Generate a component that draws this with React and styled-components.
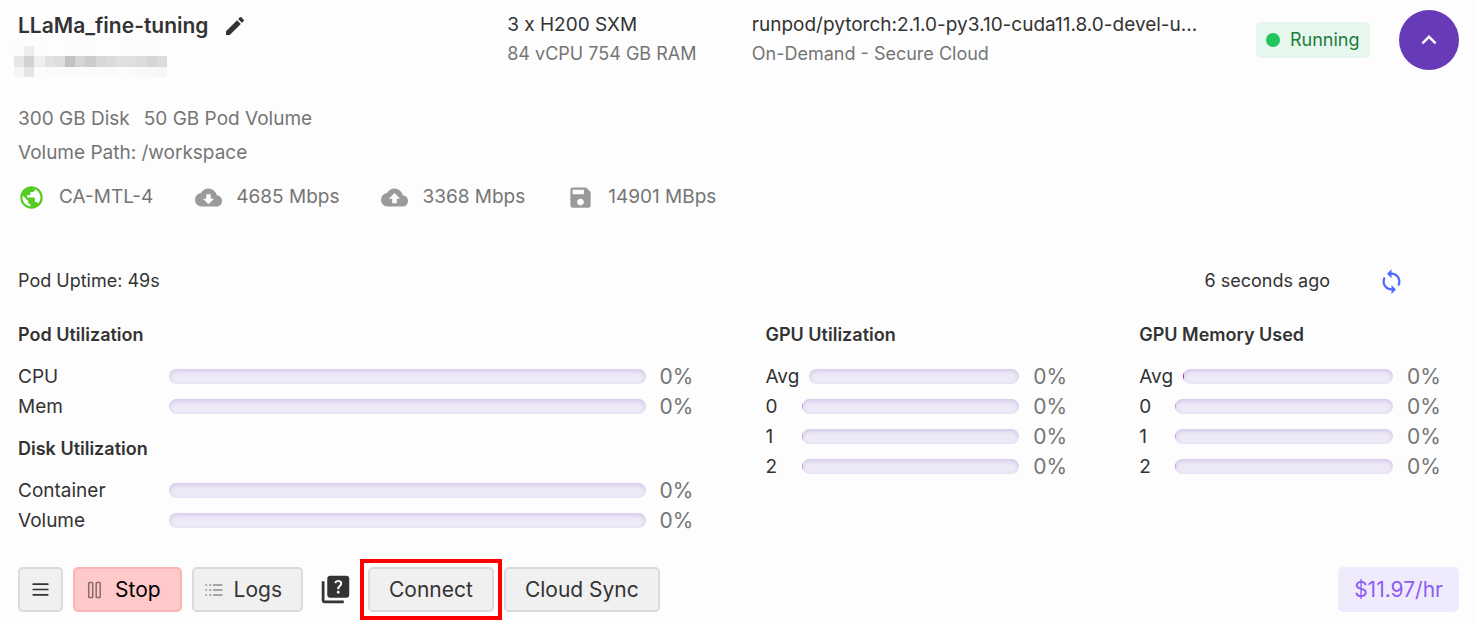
import React from 'react';
import styled, { createGlobalStyle } from 'styled-components';
import {
    MdEdit,
    MdPublic,
    MdCloudDownload,
    MdCloudUpload,
    MdSave,
    MdSync,
    MdQuiz,
    MdKeyboardArrowUp,
} from 'react-icons/md';

const GlobalStyle = createGlobalStyle`
    * {
        box-sizing: border-box;
    }
    body {
        margin: 0;
        background-color: #fdfdfd;
        color: #333;
        font-family: Inter, 'Liberation Sans', sans-serif;
        font-size: 19px;
        line-height: 30px;
    }
    button {
        font: inherit;
        cursor: pointer;
    }
`;

const Container = styled.main`
    padding: 10px 18px 0;
`;
const Header = styled.header`
    display: grid;
    grid-template-columns: minmax(0, 2fr) minmax(0, 1fr) minmax(0, 2fr) 218px;
`;
const Column = styled.div`
    display: flex;
    flex-direction: column;
    align-items: flex-start;
    padding-right: 32px;
`;
const NameRow = styled.div`
    display: flex;
    align-items: center;
    gap: 14px;
    height: 32px;
`;
const Name = styled.h1`
    margin: 0;
    font-size: 21px;
    font-weight: 600;
`;
const IconButton = styled.button`
    display: flex;
    padding: 0;
    border: 0;
    background: none;
    color: ${(props) => props.$color || '#333'};
`;
const Mosaic = styled.svg`
    display: block;
    margin: 4px 0 0 -4px;
`;
const Primary = styled.div`
    max-width: 100%;
    overflow: hidden;
    text-overflow: ellipsis;
    white-space: nowrap;
    line-height: 30px;
`;
const Secondary = styled.div`
    color: #757575;
    font-size: 18px;
    line-height: 28px;
    white-space: nowrap;
`;
const StatusArea = styled.div`
    display: flex;
    align-items: center;
    justify-content: space-between;
    height: 60px;
    padding-left: 15px;
`;
const Status = styled.div`
    display: flex;
    align-items: center;
    gap: 10px;
    height: 36px;
    padding: 0 10px;
    border-radius: 5px;
    background-color: #e6f7ee;
    color: #1c7c3c;
    font-size: 18px;
`;
const Dot = styled.span`
    width: 14px;
    height: 14px;
    border-radius: 50%;
    background-color: #22c55e;
`;
const Toggle = styled.button`
    display: flex;
    align-items: center;
    justify-content: center;
    width: 60px;
    height: 60px;
    padding: 0;
    border: 0;
    border-radius: 50%;
    background-color: #673ab7;
    color: #fff;
`;
const Details = styled.section`
    margin-top: 27px;
    color: #757575;
`;
const DetailRow = styled.div`
    display: flex;
    gap: 14px;
    height: 34px;
`;
const Stats = styled.div`
    display: flex;
    gap: 42px;
    margin-top: 10px;
`;
const Stat = styled.div`
    display: flex;
    align-items: center;
    gap: 14px;
    svg {
        color: ${(props) => props.$color || '#9a9a9a'};
    }
`;
const Uptime = styled.div`
    display: flex;
    align-items: center;
    justify-content: space-between;
    margin-top: 54px;
    padding-right: 54px;
    font-size: 18px;
`;
const Refresh = styled.div`
    display: flex;
    align-items: center;
    gap: 48px;
`;
const Utilization = styled.section`
    display: grid;
    grid-template-columns: repeat(4, minmax(0, 1fr));
    column-gap: 54px;
    margin-top: 24px;
`;
const Group = styled.div`
    grid-column: span ${(props) => props.$span || 1};
`;
const GroupTitle = styled.h2`
    margin: 0 0 12px;
    font-size: 18px;
    font-weight: 600;
    * + & {
        margin-top: 12px;
    }
`;
const Row = styled.div`
    display: flex;
    align-items: center;
    height: 30px;
`;
const Label = styled.span`
    min-width: ${(props) => (props.$wide ? '151px' : '36px')};
    padding-right: 10px;
`;
const Bar = styled.div`
    flex: 1;
    height: 15px;
    margin-bottom: 1px;
    border-radius: 8px;
    overflow: hidden;
    background-color: #ede9f6;
    box-shadow: inset 0 2px 4px rgba(103, 58, 183, 0.2);
`;
const Fill = styled.div`
    height: 100%;
    background-color: #a21fd0;
    opacity: ${(props) => (props.$faint ? 0.35 : 1)};
`;
const Percent = styled.span`
    width: 66px;
    padding-left: 14px;
    color: #757575;
    font-size: 21px;
`;
const Footer = styled.footer`
    display: flex;
    align-items: center;
    margin-top: 23px;
`;
const Button = styled.button`
    display: flex;
    align-items: center;
    gap: 11px;
    height: 45px;
    margin-right: 10px;
    padding: 0 19px;
    border: 2px solid ${(props) => (props.$danger ? '#fbb4b4' : '#dadada')};
    border-radius: 5px;
    background-color: ${(props) => (props.$danger ? '#ffc9c9' : '#f0f0f0')};
    color: ${(props) => (props.$danger ? '#000' : '#333')};
    font-size: 21px;
`;
const IconLabelButton = styled(Button)`
    padding-left: 11px;
`;
const MenuButton = styled(Button)`
    padding: 0 10px;
`;
const HelpButton = styled(IconButton)`
    margin-left: 6px;
`;
const Highlight = styled.div`
    margin: 0 2px 0 8px;
    padding: 4px;
    border: 4px solid #f00;
    ${Button} {
        margin: 0;
    }
`;
const Price = styled.div`
    display: flex;
    align-items: center;
    height: 45px;
    margin-left: auto;
    padding: 0 16px;
    border-radius: 5px;
    background-color: #f0ebfc;
    color: #8b5cf6;
    font-size: 21px;
`;

const mosaicRows = [
    ['#fcfcfc', '#ededed', '#fcfcfc', '#fdfdfd', '#fdfdfd', '#fbfbfb', '#fbfbfb', '#fbfbfb', '#fdfdfd', '#fdfdfd', '#fdfdfd', '#fcfcfc', '#fbfbfb', '#fcfcfc', '#fdfdfd'],
    ['#e5e5e5', '#d2d2d2', '#eeeeee', '#e1e1e1', '#dddddd', '#c2c2c2', '#d5d5d5', '#cbcbcb', '#d7d7d7', '#dbdbdb', '#e0e0e0', '#e0e0e0', '#dcdcdc', '#d5d5d5', '#dbdbdb'],
    ['#f5f5f5', '#e5e5e5', '#fcfcfc', '#fbfbfb', '#fbfbfb', '#fbfbfb', '#fbfbfb', '#fbfbfb', '#fbfbfb', '#fafafa', '#fcfcfc', '#fbfbfb', '#f9f9f9', '#f8f8f8', '#f6f6f6'],
];

const podRows = [
    { label: 'CPU', value: 0 },
    { label: 'Mem', value: 0 },
];
const diskRows = [
    { label: 'Container', value: 0 },
    { label: 'Volume', value: 0 },
];
const gpuRows = [
    { label: 'Avg', value: 0 },
    { label: '0', value: 0.3 },
    { label: '1', value: 0.3 },
    { label: '2', value: 0.3 },
];
const memoryRows = [
    { label: 'Avg', value: 0.5 },
    { label: '0', value: 0.3 },
    { label: '1', value: 0.3 },
    { label: '2', value: 0.3 },
];

const MenuIcon = () => (
    <svg width="21" height="21" viewBox="0 0 21 21" stroke="currentColor" strokeWidth="1.7" strokeLinecap="round">
        <path d="M3.2 5.2h14.6M3.2 10.5h14.6M3.2 15.8h14.6" />
    </svg>
);

const PauseIcon = () => (
    <svg width="18" height="18" viewBox="0 0 18 18" fill="none" stroke="#8a6b6b" strokeWidth="1.5">
        <rect x="2.7" y="1.5" width="4" height="15" rx="0.8" />
        <rect x="10.2" y="1.5" width="4" height="15" rx="0.8" />
    </svg>
);

const LogsIcon = () => (
    <svg width="18" height="16" viewBox="0 0 18 16" fill="none" stroke="#8c8c8c" strokeWidth="1.4" strokeLinecap="round">
        <path d="M.9 3h.6M4.8 3h.9M8.5 3h8.5M.9 8h.6M4.8 8h.9M8.5 8h8.5M.9 13h.6M4.8 13h.9M8.5 13h8.5" />
    </svg>
);

const Meters = ({ rows, wide }) =>
    rows.map(({ label, value }) => (
        <Row key={label}>
            <Label $wide={wide}>{label}</Label>
            <Bar role="progressbar" aria-label={label} aria-valuenow={value}>
                <Fill $faint={value < 0.5} style={{ width: `${value}%` }} />
            </Bar>
            <Percent>{Math.floor(value)}%</Percent>
        </Row>
    ));

function App() {
    return (
        <Container>
            <GlobalStyle />
            <Header>
                <Column>
                    <NameRow>
                        <Name>LLaMa_fine-tuning</Name>
                        <IconButton aria-label="Edit name">
                            <MdEdit size={24} />
                        </IconButton>
                    </NameRow>
                    <Mosaic width="153" height="31" viewBox="0 0 15 3" preserveAspectRatio="none" shapeRendering="crispEdges">
                        {mosaicRows.map((row, y) => row.map((fill, x) => <rect key={`${x}-${y}`} x={x} y={y} width="1" height="1" fill={fill} />))}
                    </Mosaic>
                </Column>
                <Column>
                    <Primary>3 x H200 SXM</Primary>
                    <Secondary>84 vCPU 754 GB RAM</Secondary>
                </Column>
                <Column>
                    <Primary>runpod/pytorch:2.1.0-py3.10-cuda11.8.0-devel-u...</Primary>
                    <Secondary>On-Demand - Secure Cloud</Secondary>
                </Column>
                <StatusArea>
                    <Status>
                        <Dot />
                        Running
                    </Status>
                    <Toggle aria-label="Collapse">
                        <MdKeyboardArrowUp size={30} />
                    </Toggle>
                </StatusArea>
            </Header>
            <Details>
                <DetailRow>
                    <span>300 GB Disk</span>
                    <span>50 GB Pod Volume</span>
                </DetailRow>
                <DetailRow>Volume Path: /workspace</DetailRow>
                <Stats>
                    <Stat $color="#55cc22">
                        <MdPublic size={27} />
                        CA-MTL-4
                    </Stat>
                    <Stat>
                        <MdCloudDownload size={27} />
                        4685 Mbps
                    </Stat>
                    <Stat>
                        <MdCloudUpload size={27} />
                        3368 Mbps
                    </Stat>
                    <Stat>
                        <MdSave size={27} />
                        14901 MBps
                    </Stat>
                </Stats>
            </Details>
            <Uptime>
                <span>Pod Uptime: 49s</span>
                <Refresh>
                    <span>6 seconds ago</span>
                    <IconButton $color="#4f6bff" aria-label="Refresh">
                        <MdSync size={27} />
                    </IconButton>
                </Refresh>
            </Uptime>
            <Utilization>
                <Group $span={2}>
                    <GroupTitle>Pod Utilization</GroupTitle>
                    <Meters rows={podRows} wide />
                    <GroupTitle>Disk Utilization</GroupTitle>
                    <Meters rows={diskRows} wide />
                </Group>
                <Group>
                    <GroupTitle>GPU Utilization</GroupTitle>
                    <Meters rows={gpuRows} />
                </Group>
                <Group>
                    <GroupTitle>GPU Memory Used</GroupTitle>
                    <Meters rows={memoryRows} />
                </Group>
            </Utilization>
            <Footer>
                <MenuButton aria-label="Menu">
                    <MenuIcon />
                </MenuButton>
                <IconLabelButton $danger>
                    <PauseIcon />
                    Stop
                </IconLabelButton>
                <IconLabelButton>
                    <LogsIcon />
                    Logs
                </IconLabelButton>
                <HelpButton aria-label="Help">
                    <MdQuiz size={33} />
                </HelpButton>
                <Highlight>
                    <Button>Connect</Button>
                </Highlight>
                <Button>Cloud Sync</Button>
                <Price>$11.97/hr</Price>
            </Footer>
        </Container>
    );
}

export default App;
